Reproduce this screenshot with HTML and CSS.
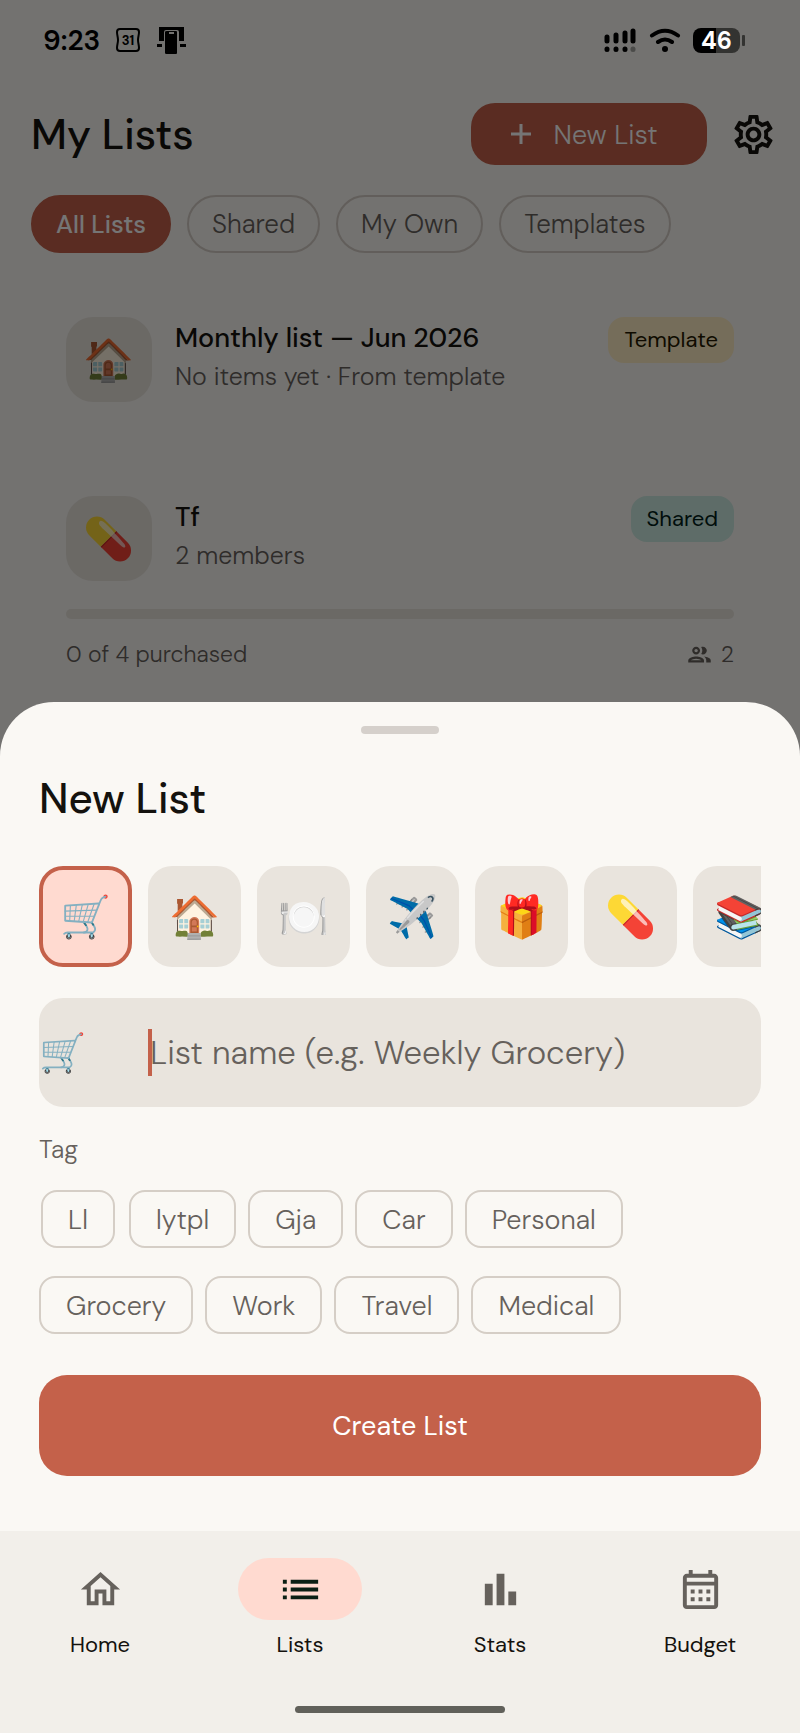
FILE: index.html
```html
<!DOCTYPE html>
<html lang="en">
<head>
  <meta charset="UTF-8" />
  <meta name="viewport" content="width=device-width, initial-scale=1.0" />
  <title>My Lists</title>
  <link rel="stylesheet" href="styles.css">
</head>
<body>

<div class="phone">

  <!-- lists page, under the scrim -->
  <main class="page">
    <header class="page-header">
      <h1>My Lists</h1>
      <button class="new-btn" type="button">
        <svg class="plus" viewBox="0 0 20 20"><path d="M10 0v20M0 10h20" stroke="currentColor" stroke-width="3"/></svg>
        New List
      </button>
      <button class="icon-btn" type="button" aria-label="Settings">
        <svg class="icon" viewBox="0 0 24 24"><path fill-rule="evenodd" d="M19.43 12.98c.04-.32.07-.64.07-.98 0-.34-.03-.66-.07-.98l2.11-1.65c.19-.15.24-.42.12-.64l-2-3.46c-.09-.16-.26-.25-.44-.25-.06 0-.12.01-.17.03l-2.49 1c-.52-.4-1.08-.73-1.69-.98l-.38-2.65C14.46 2.18 14.25 2 14 2h-4c-.25 0-.46.18-.49.42l-.38 2.65c-.61.25-1.17.59-1.69.98l-2.49-1c-.06-.02-.12-.03-.18-.03-.17 0-.34.09-.43.25l-2 3.46c-.13.22-.07.49.12.64l2.11 1.65c-.04.32-.07.65-.07.98 0 .33.03.66.07.98l-2.11 1.65c-.19.15-.24.42-.12.64l2 3.46c.09.16.26.25.44.25.06 0 .12-.01.17-.03l2.49-1c.52.4 1.08.73 1.69.98l.38 2.65c.03.24.24.42.49.42h4c.25 0 .46-.18.49-.42l.38-2.65c.61-.25 1.17-.59 1.69-.98l2.49 1c.06.02.12.03.18.03.17 0 .34-.09.43-.25l2-3.46c.12-.22.07-.49-.12-.64l-2.11-1.65zm-1.98-1.71c.04.31.05.52.05.73 0 .21-.02.43-.05.73l-.14 1.13.89.7 1.08.84-.7 1.21-1.27-.51-1.04-.42-.9.68c-.43.32-.84.56-1.25.73l-1.06.43-.16 1.13-.2 1.35h-1.4l-.19-1.35-.16-1.13-1.06-.43c-.43-.18-.83-.41-1.23-.71l-.91-.7-1.06.43-1.27.51-.7-1.21 1.08-.84.89-.7-.14-1.13c-.03-.31-.05-.54-.05-.74s.02-.43.05-.73l.14-1.13-.89-.7-1.08-.84.7-1.21 1.27.51 1.04.42.9-.68c.43-.32.84-.56 1.25-.73l1.06-.43.16-1.13.2-1.35h1.39l.19 1.35.16 1.13 1.06.43c.43.18.83.41 1.23.71l.91.7 1.06-.43 1.27-.51.7 1.21-1.07.85-.89.7.14 1.13zM12 8c-2.21 0-4 1.79-4 4s1.79 4 4 4 4-1.79 4-4-1.79-4-4-4zm0 6c-1.1 0-2-.9-2-2s.9-2 2-2 2 .9 2 2-.9 2-2 2z"/></svg>
      </button>
    </header>

    <div class="filters">
      <button class="filter active" type="button">All Lists</button>
      <button class="filter" type="button">Shared</button>
      <button class="filter" type="button">My Own</button>
      <button class="filter" type="button">Templates</button>
    </div>

    <section class="lists">
      <article class="list-card">
        <div class="list-row">
          <div class="list-emoji">🏠</div>
          <div class="list-text">
            <h2>Monthly list — Jun 2026</h2>
            <p>No items yet · From template</p>
          </div>
          <span class="badge badge-template">Template</span>
        </div>
      </article>

      <article class="list-card">
        <div class="list-row">
          <div class="list-emoji">💊</div>
          <div class="list-text">
            <h2>Tf</h2>
            <p>2 members</p>
          </div>
          <span class="badge badge-shared">Shared</span>
        </div>
        <div class="progress"></div>
        <div class="list-foot">
          <span>0 of 4 purchased</span>
          <span class="members">
            <svg viewBox="0 0 24 24"><path d="M9 13.75c-2.34 0-7 1.17-7 3.5V19h14v-1.75c0-2.33-4.66-3.5-7-3.5zM4.34 17c.84-.58 2.87-1.25 4.66-1.25s3.82.67 4.66 1.25H4.34zM9 12c1.93 0 3.5-1.57 3.5-3.5S10.93 5 9 5 5.5 6.57 5.5 8.5 7.07 12 9 12zm0-5c.83 0 1.5.67 1.5 1.5S9.83 10 9 10s-1.5-.67-1.5-1.5S8.17 7 9 7zm7.04 6.81c1.16.84 1.96 1.96 1.96 3.44V19h4v-1.75c0-2.02-3.5-3.17-5.96-3.44zM15 12c1.93 0 3.5-1.57 3.5-3.5S16.93 5 15 5c-.54 0-1.04.13-1.5.35.63.89 1 1.98 1 3.15s-.37 2.26-1 3.15c.46.22.96.35 1.5.35z"/></svg>
            2
          </span>
        </div>
      </article>
    </section>
  </main>

  <!-- scrim with status bar, sheet and navigation -->
  <div class="overlay">
    <div class="status-bar">
      <span class="clock">9:23</span>
      <svg class="st-cal" viewBox="0 0 26 26"><path d="M5 2h16q3 0 3 3c0 3-1 5-1 8s1 5 1 8q0 3-3 3H5q-3 0-3-3c0-3 1-5 1-8s-1-5-1-8q0-3 3-3z" fill="none" stroke="#000" stroke-width="2"/><text x="13" y="18" text-anchor="middle" class="cal-text">31</text></svg>
      <svg class="st-cast" viewBox="0 0 30 28"><path d="M3 1h25v14h-5V6q0-2-2-2H10Q8 4 8 6v9H3z"/><path d="M1 18h5v3H1zM24 18h6v3h-6z"/><path fill-rule="evenodd" d="M11 5h9q1 0 1 1v21q0 1-1 1h-9.500q-1.500 0-1.500-1V6q0-1 2-1zM13 6v2h5V6z"/></svg>
      <span class="spacer"></span>
      <svg class="st-signal" viewBox="0 0 32 24"><g stroke="#000" stroke-width="5" stroke-linecap="round"><path d="M3 9v4M12 7v6M21 5v8M29 3v10M3 21v.5M12 21v.5M21 21v.5"/><path d="M29 21v.5" stroke="#4b4b49"/></g></svg>
      <svg class="st-wifi" viewBox="0 0 32 24"><g fill="none" stroke="#000" stroke-width="4" stroke-linecap="round"><path d="M3 7.500Q16-2 29 7.500M9 14q7-5 14 0"/></g><circle cx="16" cy="21" r="3"/></svg>
      <span class="battery">46</span>
    </div>

    <section class="sheet">
      <div class="handle"></div>
      <h2 class="sheet-title">New List</h2>

      <div class="emoji-row">
        <button class="emoji-btn selected" type="button">🛒</button>
        <button class="emoji-btn" type="button">🏠</button>
        <button class="emoji-btn" type="button">🍽️</button>
        <button class="emoji-btn" type="button">✈️</button>
        <button class="emoji-btn" type="button">🎁</button>
        <button class="emoji-btn" type="button">💊</button>
        <button class="emoji-btn" type="button">📚</button>
      </div>

      <div class="name-field">
        <span class="name-emoji">🛒</span>
        <span class="caret"></span>
        <input type="text" id="listName" aria-label="List name" placeholder="List name (e.g. Weekly Grocery)" />
      </div>

      <p class="tag-label" id="tagLabel">Tag</p>
      <div class="tags" role="group" aria-labelledby="tagLabel">
        <div class="tag-slot"><button class="tag" type="button">Ll</button></div>
        <div class="tag-slot"><button class="tag" type="button">lytpl</button></div>
        <div class="tag-slot"><button class="tag" type="button">Gja</button></div>
        <div class="tag-slot"><button class="tag" type="button">Car</button></div>
        <div class="tag-slot"><button class="tag" type="button">Personal</button></div>
        <div class="tag-slot"><button class="tag" type="button">Grocery</button></div>
        <div class="tag-slot"><button class="tag" type="button">Work</button></div>
        <div class="tag-slot"><button class="tag" type="button">Travel</button></div>
        <div class="tag-slot"><button class="tag" type="button">Medical</button></div>
      </div>

      <button class="create-btn" type="button">Create List</button>
    </section>

    <footer class="bottom">
      <nav class="tabs">
        <a class="tab" href="#home">
          <span class="pill"><svg class="icon" viewBox="0 0 24 24"><path d="M12 5.690l5 4.500V18h-2v-6H9v6H7v-7.810l5-4.500M12 3L2 12h3v8h6v-6h2v6h6v-8h3L12 3z"/></svg></span>
          Home
        </a>
        <a class="tab current" href="#lists">
          <span class="pill"><svg class="icon" viewBox="0 0 24 24"><path d="M3 7h2v2H3zM3 11h2v2H3zM3 15h2v2H3zM7 7h14v2H7zM7 11h14v2H7zM7 15h14v2H7z"/></svg></span>
          Lists
        </a>
        <a class="tab" href="#stats">
          <span class="pill"><svg class="icon" viewBox="0 0 24 24"><path d="M4 9h4v11H4zM10 4h4v16h-4zM16 13h4v7h-4z"/></svg></span>
          Stats
        </a>
        <a class="tab" href="#budget">
          <span class="pill"><svg class="icon" viewBox="0 0 24 24"><path d="M19 4h-1V2h-2v2H8V2H6v2H5c-1.110 0-1.990.9-1.990 2L3 20c0 1.100.890 2 2 2h14c1.100 0 2-.9 2-2V6c0-1.100-.9-2-2-2zm0 16H5V10h14v10zm0-12H5V6h14v2zM9 14H7v-2h2v2zm4 0h-2v-2h2v2zm4 0h-2v-2h2v2zm-8 4H7v-2h2v2zm4 0h-2v-2h2v2zm4 0h-2v-2h2v2z"/></svg></span>
          Budget
        </a>
      </nav>
      <div class="home-bar"></div>
    </footer>
  </div>

</div>

</body>
</html>
```
FILE: styles.css
```css
:root {
  --bg: #faf8f4;
  --nav-bg: #f2efea;
  --tile: #e9e4dd;
  --primary: #c4614a;
  --primary-soft: #ffdad0;
  --text: #14120e;
  --muted: #66615c;
  --outline: #d5cec6;
}

* { box-sizing: border-box; }

body {
  margin: 0;
  background: var(--bg);
  color: var(--text);
  font-family: "DM Sans", Inter, "Noto Color Emoji", sans-serif;
  font-size: 27px;
}

h1, h2, p { margin: 0; }

h1, h2 { font-weight: 500; }

button {
  font: inherit;
  color: inherit;
  border: none;
  background: none;
  padding: 0;
  cursor: pointer;
}

svg { display: block; fill: currentColor; }

.icon { width: 47px; height: 47px; }

/* page and overlay share one grid cell */
.phone {
  display: grid;
  min-height: 100vh;
}

.page, .overlay {
  grid-area: 1 / 1;
  min-width: 0;
}

/* ---- lists page ---- */
.page { padding: 103px 23px 0 31px; }

.page-header {
  display: flex;
  align-items: center;
}

.page-header h1 {
  flex: 1;
  font-size: 42px;
}

.new-btn {
  display: flex;
  align-items: center;
  justify-content: center;
  gap: 23px;
  width: 236px;
  height: 62px;
  padding-right: 10px;
  border-radius: 24px;
  background: var(--primary);
  color: #fff;
  font-weight: 300;
}

.plus { width: 20px; height: 20px; }

.icon-btn { margin-left: 23px; }

.filters {
  display: flex;
  gap: 16px;
  margin-top: 30px;
}

.filter {
  height: 58px;
  padding: 0 23px;
  border: 2px solid var(--outline);
  border-radius: 29px;
  color: var(--muted);
  font-size: 26px;
  font-weight: 300;
}

.filter.active {
  border-color: var(--primary);
  background: var(--primary);
  color: #fff;
  font-size: 25px;
  font-weight: 500;
}

.lists {
  display: flex;
  flex-direction: column;
  gap: 94px;
  padding: 64px 43px 0 35px;
}

.list-row {
  display: flex;
  align-items: flex-start;
  gap: 23px;
}

.list-emoji {
  display: flex;
  align-items: center;
  justify-content: center;
  width: 86px;
  height: 85px;
  border-radius: 27px;
  background: var(--tile);
  font-size: 41px;
}

.list-text {
  flex: 1;
  padding-top: 4px;
}

.list-text h2 {
  font-size: 27px;
  line-height: 34px;
}

.list-text p {
  margin-top: 6px;
  color: var(--muted);
  font-size: 25px;
  font-weight: 300;
  line-height: 32px;
}

.badge {
  padding: 0 16px;
  border-radius: 16px;
  font-size: 22px;
  line-height: 46px;
}

.badge-template { background: #ffedc4; color: #241a00; }
.badge-shared { background: #cdebe2; color: #00201a; }

.progress {
  height: 10px;
  margin-top: 28px;
  border-radius: 5px;
  background: var(--tile);
}

.list-foot {
  display: flex;
  justify-content: space-between;
  margin-top: 20px;
  color: var(--muted);
  font-size: 23px;
  font-weight: 300;
  line-height: 30px;
}

.members {
  display: flex;
  align-items: center;
  gap: 8px;
}

.members svg { width: 27px; height: 27px; }

/* ---- overlay ---- */
.overlay {
  display: flex;
  flex-direction: column;
  z-index: 1;
  background: rgba(0, 0, 0, 0.54);
}

.status-bar {
  display: flex;
  align-items: center;
  height: 80px;
  margin-bottom: auto;
  padding: 0 60px 0 43px;
  color: #000;
}

.clock {
  font-size: 28px;
  font-weight: 600;
}

.spacer { flex: 1; }

.st-cal { width: 26px; height: 26px; margin-left: 15px; }
.cal-text { font-size: 13px; font-weight: 700; }
.st-cast { width: 30px; height: 28px; margin-left: 15px; }
.st-signal { width: 32px; height: 24px; margin-right: 13px; }
.st-wifi { width: 32px; height: 24px; margin-right: 12px; }

.battery {
  position: relative;
  width: 47px;
  border-radius: 8px;
  background: linear-gradient(90deg, #000 50%, #333331 50%);
  color: #fff;
  font-size: 24px;
  font-weight: 700;
  line-height: 25px;
  text-align: center;
}

.battery::after {
  content: "";
  position: absolute;
  top: 7px;
  right: -5px;
  width: 3px;
  height: 11px;
  border-radius: 1px;
  background: #333331;
}

/* ---- new list sheet ---- */
.sheet {
  padding: 24px 39px 55px;
  border-radius: 54px 54px 0 0;
  background: var(--bg);
}

.handle {
  width: 78px;
  height: 8px;
  margin: 0 auto;
  border-radius: 4px;
  background: #d5d0cb;
}

.sheet-title {
  margin-top: 39px;
  font-size: 42px;
  line-height: 52px;
}

.emoji-row {
  display: flex;
  gap: 16px;
  margin-top: 41px;
  overflow: hidden;
}

.emoji-btn {
  flex: none;
  width: 93px;
  height: 101px;
  border-radius: 24px;
  background: var(--tile);
  font-size: 41px;
}

.emoji-btn.selected {
  border: 4px solid var(--primary);
  background: var(--primary-soft);
}

.name-field {
  display: flex;
  align-items: center;
  height: 109px;
  margin-top: 31px;
  border-radius: 24px;
  background: var(--tile);
}

.name-emoji {
  width: 109px;
  font-size: 38px;
}

.caret {
  width: 4px;
  height: 47px;
  margin-right: -2px;
  background: var(--primary);
}

.name-field input {
  flex: 1;
  min-width: 0;
  height: 100%;
  padding: 0 24px 0 0;
  border: none;
  outline: none;
  background: none;
  color: var(--text);
  caret-color: var(--primary);
  font: inherit;
  font-size: 33px;
  font-weight: 300;
}

.name-field input::placeholder { color: var(--muted); opacity: 1; }

.tag-label {
  margin-top: 27px;
  color: var(--muted);
  font-size: 25px;
  font-weight: 300;
  line-height: 32px;
}

.tags {
  display: flex;
  flex-wrap: wrap;
  gap: 28px 12px;
  max-width: 630px;
  margin-top: 24px;
}

.tag-slot {
  display: flex;
  justify-content: center;
  min-width: 78px;
}

.tag {
  height: 58px;
  padding: 0 25px;
  border: 2px solid var(--outline);
  border-radius: 16px;
  color: var(--muted);
  font-weight: 300;
}

.create-btn {
  width: 100%;
  height: 101px;
  margin-top: 41px;
  border-radius: 28px;
  background: var(--primary);
  color: #fff;
}

/* ---- bottom navigation ---- */
.bottom {
  padding: 27px 0 20px;
  background: var(--nav-bg);
}

.tabs {
  display: grid;
  grid-template-columns: repeat(4, 1fr);
}

.tab {
  display: flex;
  flex-direction: column;
  align-items: center;
  gap: 11px;
  color: var(--text);
  font-size: 22px;
  line-height: 28px;
  text-decoration: none;
}

.pill {
  display: flex;
  align-items: center;
  justify-content: center;
  width: 124px;
  height: 62px;
  border-radius: 31px;
  color: var(--muted);
}

.current .pill {
  background: var(--primary-soft);
  color: #0b1f14;
}

.home-bar {
  width: 210px;
  height: 7px;
  margin: 47px auto 0;
  border-radius: 4px;
  background: #61605a;
}
```
